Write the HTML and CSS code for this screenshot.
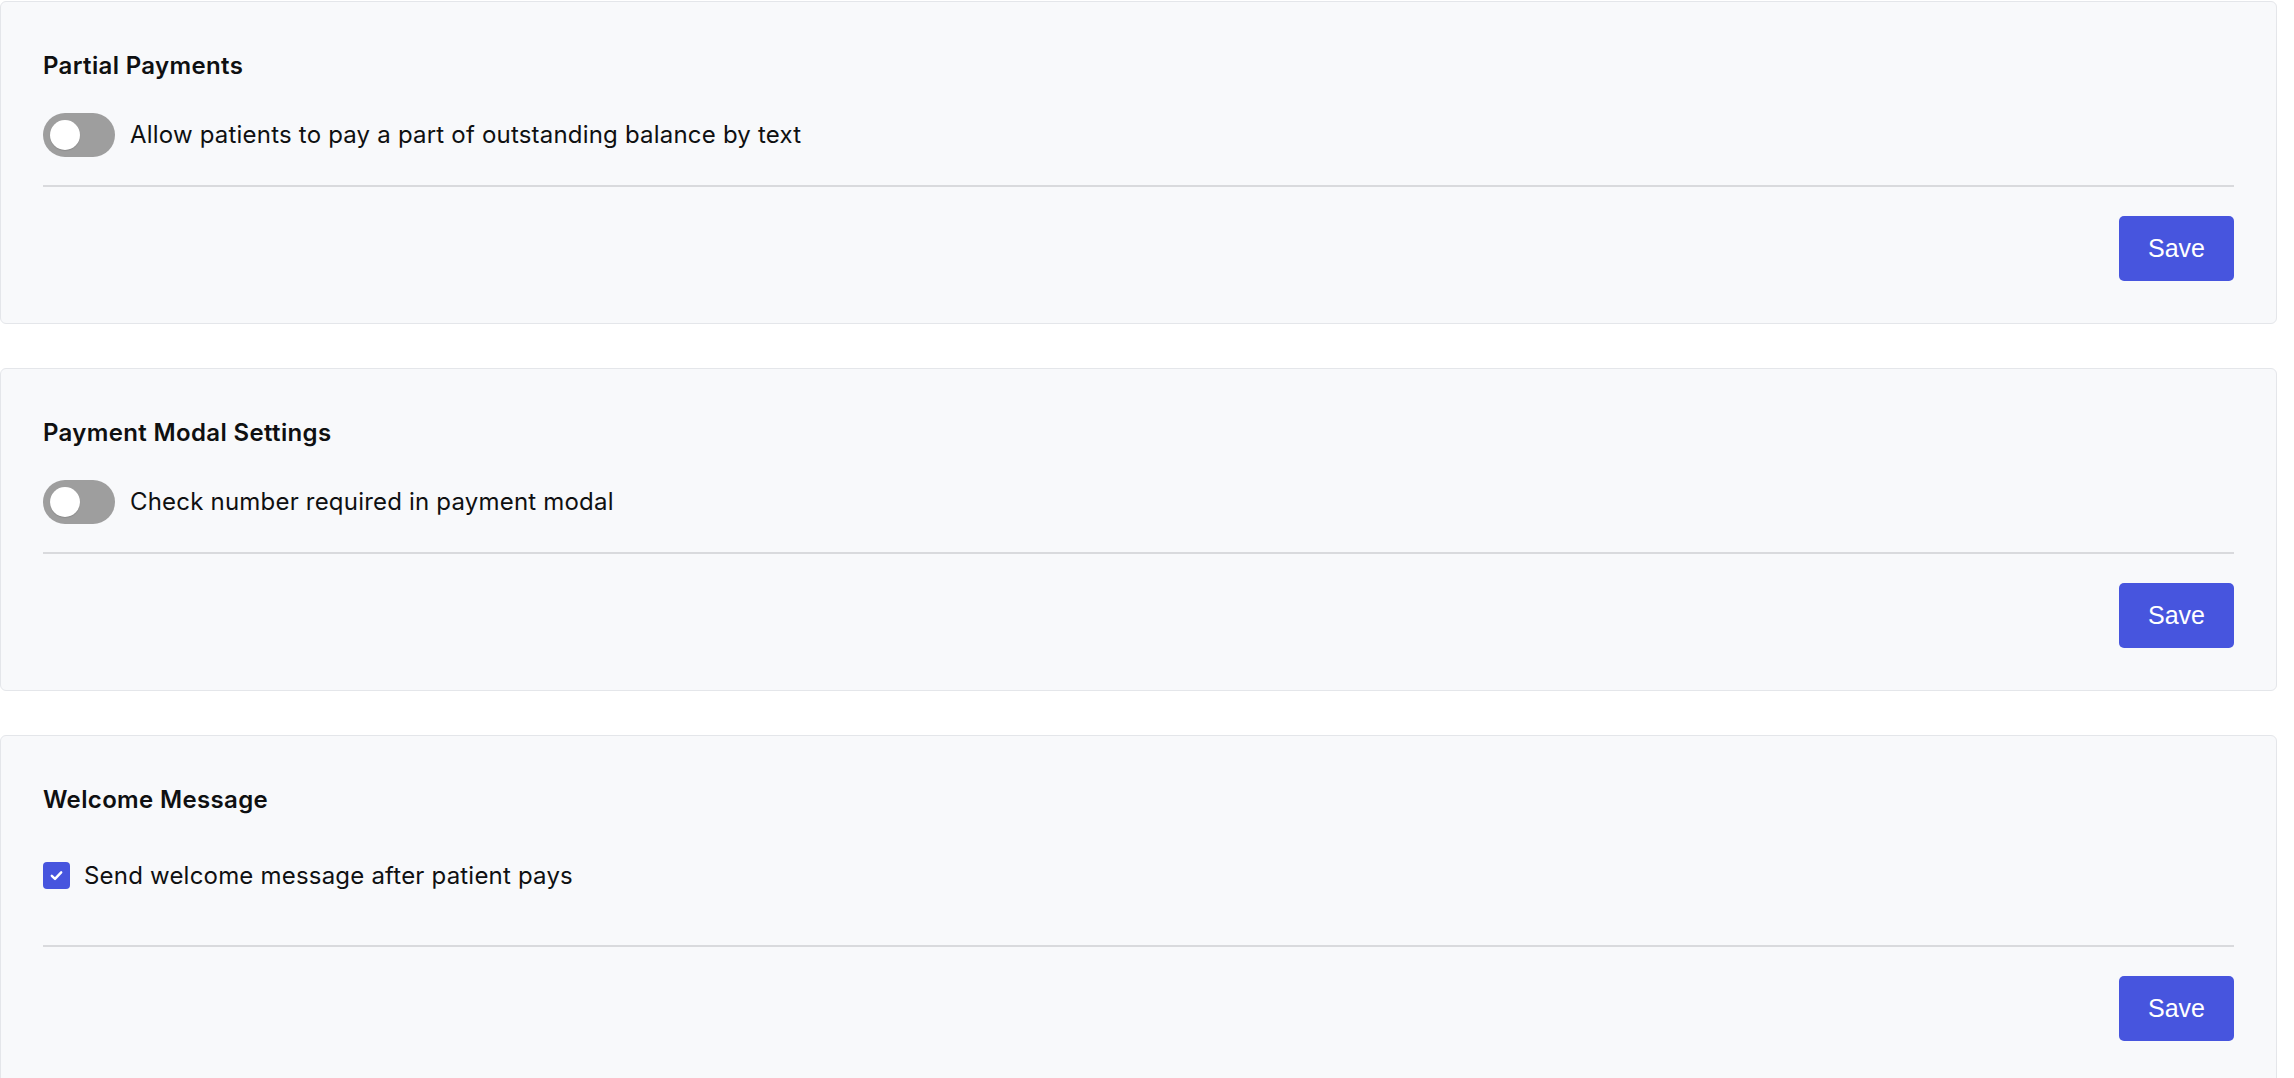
FILE: index.html
```html
<!DOCTYPE html>
<html lang="en">
<head>
<meta charset="utf-8">
<title>Payment settings</title>
<link rel="stylesheet" href="styles.css">
</head>
<body>
<main class="page">
  <section class="card">
    <h2 class="card-title">Partial Payments</h2>
    <div class="option-row toggle-row">
      <span class="toggle"><span class="knob"></span></span>
      <span class="option-label">Allow patients to pay a part of outstanding balance by text</span>
    </div>
    <hr class="divider">
    <div class="card-footer"><button class="save-btn" type="button">Save</button></div>
  </section>

  <section class="card">
    <h2 class="card-title">Payment Modal Settings</h2>
    <div class="option-row toggle-row">
      <span class="toggle"><span class="knob"></span></span>
      <span class="option-label">Check number required in payment modal</span>
    </div>
    <hr class="divider">
    <div class="card-footer"><button class="save-btn" type="button">Save</button></div>
  </section>

  <section class="card">
    <h2 class="card-title">Welcome Message</h2>
    <div class="option-row check-row">
      <span class="checkbox">
        <svg viewBox="0 0 16 16" width="15" height="15" aria-hidden="true"><path d="M3 8.4 L6.4 11.6 L13 4.6" fill="none" stroke="#fff" stroke-width="2.6" stroke-linecap="round" stroke-linejoin="round"/></svg>
      </span>
      <span class="option-label">Send welcome message after patient pays</span>
    </div>
    <hr class="divider divider-check">
    <div class="card-footer"><button class="save-btn" type="button">Save</button></div>
  </section>
</main>
</body>
</html>
```

FILE: styles.css
```css
* { box-sizing: border-box; }

html, body {
  margin: 0;
  padding: 0;
  background: #ffffff;
}

body {
  font-family: Inter, "Noto Sans", sans-serif;
  color: #0f1011;
}

.page {
  display: flex;
  flex-direction: column;
  gap: 44px;
  padding: 1px 17px 0 0;
}

.card {
  background: #f8f9fb;
  border: 1px solid #e4e6ea;
  border-radius: 6px;
  padding: 48px 42px 42px 42px;
}

.card-title {
  margin: 0;
  font-size: 24px;
  line-height: 32px;
  font-weight: 600;
  letter-spacing: 0.35px;
}

.option-row {
  display: flex;
  align-items: center;
}

.toggle-row {
  margin-top: 31px;
  gap: 15px;
  height: 44px;
}

.check-row {
  margin-top: 46px;
  gap: 14px;
  height: 27px;
}

.option-label {
  font-size: 24px;
  line-height: 32px;
  font-weight: 400;
  letter-spacing: 0.2px;
}

.toggle {
  display: flex;
  align-items: center;
  width: 72px;
  height: 44px;
  border-radius: 22px;
  background: #9e9e9e;
  padding-left: 7px;
  flex: none;
}

.knob {
  width: 30px;
  height: 30px;
  border-radius: 50%;
  background: #ffffff;
  box-shadow: 0 1px 1px rgba(0, 0, 0, 0.12);
}

.checkbox {
  width: 27px;
  height: 27px;
  border-radius: 4px;
  background: #4755de;
  display: flex;
  align-items: center;
  justify-content: center;
  flex: none;
}

.divider {
  margin: 28px 0 0 0;
  border: 0;
  height: 2px;
  background: #d9dadd;
}

.divider-check {
  margin-top: 56px;
}

.card-footer {
  display: flex;
  justify-content: flex-end;
  margin-top: 29px;
}

.save-btn {
  width: 115px;
  height: 65px;
  border: 0;
  border-radius: 5px;
  background: #4755de;
  color: #ffffff;
  font-family: "Liberation Sans", Arial, sans-serif;
  font-size: 25px;
  padding: 0;
  cursor: pointer;
}
```
